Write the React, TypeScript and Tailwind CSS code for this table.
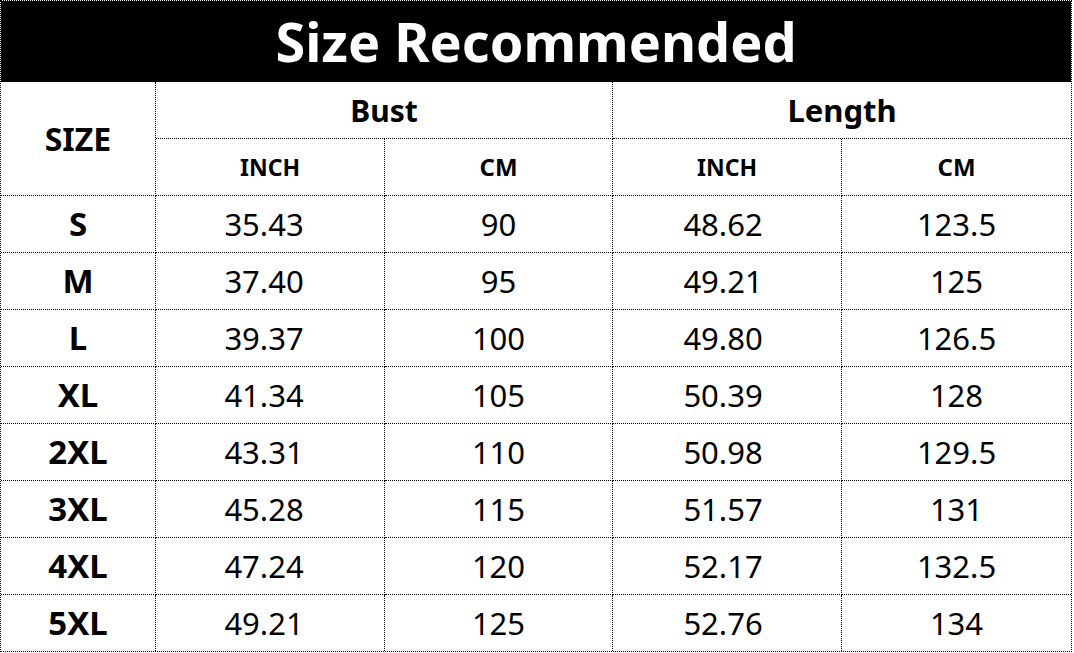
import React from 'react';

interface SizeRow {
  size: string;
  bustInch: string;
  bustCm: string;
  lengthInch: string;
  lengthCm: string;
}

const rows: SizeRow[] = [
  { size: 'S', bustInch: '35.43', bustCm: '90', lengthInch: '48.62', lengthCm: '123.5' },
  { size: 'M', bustInch: '37.40', bustCm: '95', lengthInch: '49.21', lengthCm: '125' },
  { size: 'L', bustInch: '39.37', bustCm: '100', lengthInch: '49.80', lengthCm: '126.5' },
  { size: 'XL', bustInch: '41.34', bustCm: '105', lengthInch: '50.39', lengthCm: '128' },
  { size: '2XL', bustInch: '43.31', bustCm: '110', lengthInch: '50.98', lengthCm: '129.5' },
  { size: '3XL', bustInch: '45.28', bustCm: '115', lengthInch: '51.57', lengthCm: '131' },
  { size: '4XL', bustInch: '47.24', bustCm: '120', lengthInch: '52.17', lengthCm: '132.5' },
  { size: '5XL', bustInch: '49.21', bustCm: '125', lengthInch: '52.76', lengthCm: '134' },
];

const cell = 'flex items-center justify-center border-dotted border-black';

export default function App() {
  return (
    <div
      className="w-[1072px] h-[652px] border border-dotted border-black bg-white text-black"
      style={{ fontFamily: '"Noto Sans", "Open Sans", sans-serif' }}
    >
      <div className="h-[81px] bg-black border-b border-dotted border-black flex items-center justify-center">
        <h1 className="text-white font-bold text-[54px] leading-none">Size Recommended</h1>
      </div>
      <div className="grid grid-cols-[155px_229px_228px_229px_229px] grid-rows-[repeat(9,57px)_56px]">
        <div className={`${cell} row-span-2 border-r border-b text-[32px] font-bold`}>SIZE</div>
        <div className={`${cell} col-span-2 border-r border-b text-[30px] font-bold`}>Bust</div>
        <div className={`${cell} col-span-2 border-b text-[31px] font-bold`}>Length</div>
        <div className={`${cell} border-r border-b text-[23px] font-bold`}>INCH</div>
        <div className={`${cell} border-r border-b text-[24px] font-bold`}>CM</div>
        <div className={`${cell} border-r border-b text-[23px] font-bold`}>INCH</div>
        <div className={`${cell} border-b text-[24px] font-bold`}>CM</div>
        {rows.map((r, i) => {
          const last = i === rows.length - 1;
          const b = last ? '' : 'border-b';
          return (
            <React.Fragment key={r.size}>
              <div className={`${cell} ${b} border-r text-[33px] font-bold`}>{r.size}</div>
              <div className={`${cell} ${b} border-r pr-[12px] text-[31px]`}>{r.bustInch}</div>
              <div className={`${cell} ${b} border-r text-[31px]`}>{r.bustCm}</div>
              <div className={`${cell} ${b} border-r pr-[8px] text-[31px]`}>{r.lengthInch}</div>
              <div className={`${cell} ${b} text-[31px]`}>{r.lengthCm}</div>
            </React.Fragment>
          );
        })}
      </div>
    </div>
  );
}
